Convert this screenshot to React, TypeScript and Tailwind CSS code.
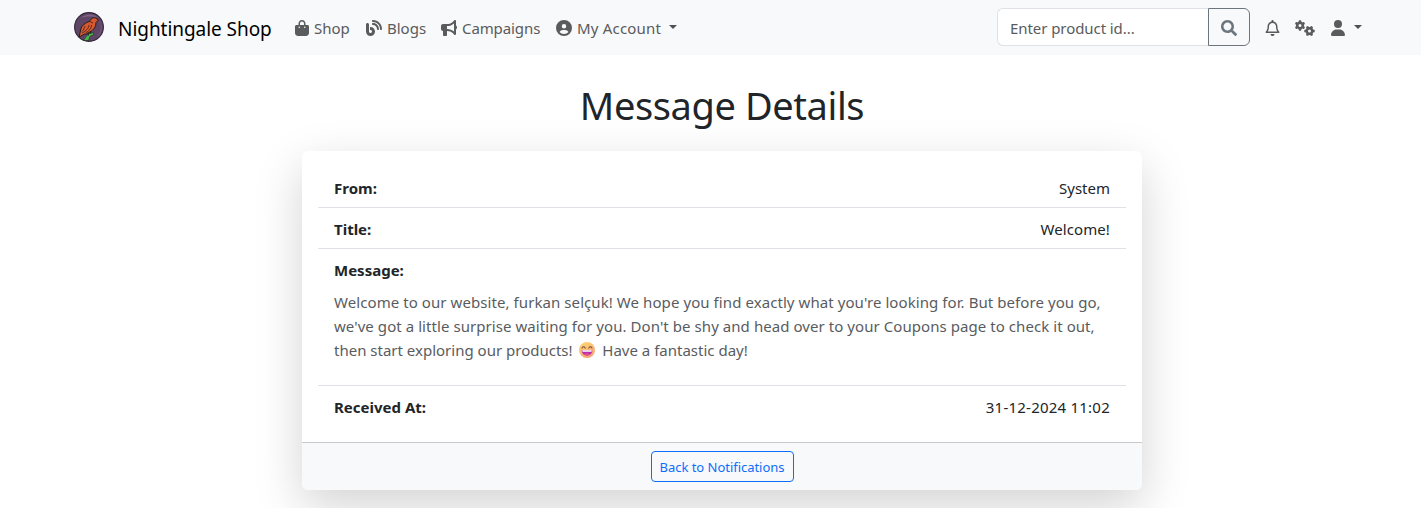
import { FaBagShopping, FaBlog, FaBullhorn, FaCircleUser, FaRegBell, FaGears, FaUser } from "react-icons/fa6";
import { FaSearch } from "react-icons/fa";

function Logo() {
  return (
    <svg width="30" height="30" viewBox="0 0 30 30">
      <circle cx="15" cy="15" r="14.4" fill="#5f4566" stroke="#33283a" strokeWidth="1.1" />
      <path d="M7 6C11 2 19 1 24 6C20 4 12 4 7 6Z" fill="#7c6484" />
      <path d="M24 7c4 6 4 13-2 19 7-4 8-13 2-19Z" fill="#74587c" />
      <path d="M9.500 28.500l2.500-4 4-3.500 3-.5 1 2-4 2-1.500 4Z" fill="#45b64e" stroke="#222" strokeWidth=".6" />
      <path d="M24.500 8L21.500 6C19 5 17 6.700 15.500 9.500C11.500 10.500 8 13 6.800 17L5.200 25L10.500 22L12 22.300L15.800 20C20 18 22 14.500 22 10.500Z" fill="#d8592f" stroke="#2a1c1c" strokeWidth="1" strokeLinejoin="round" />
      <path d="M16 9.500l3 1.500M15 13c0 3-3 6-7 8M17.500 13c0 4-3 6-6 8M11 14c-.5 2-1.500 4-3 5.500" fill="none" stroke="#3a1f1c" strokeWidth=".8" />
      <path d="M16 19.500l1 2.500M14 20.500l.5 3" stroke="#222" strokeWidth=".9" />
    </svg>
  );
}

function Grin() {
  return (
    <svg width="18" height="18" viewBox="0 0 18 18" className="mx-[2px] inline-block align-[-3px]">
      <defs>
        <linearGradient id="face" x1="0" y1="0" x2="0.5" y2="1">
          <stop offset="0" stopColor="#ffda70" />
          <stop offset="1" stopColor="#f5a574" />
        </linearGradient>
      </defs>
      <circle cx="9" cy="9" r="8" fill="url(#face)" />
      <path d="M4 7q1.500-2.400 3.200 0M10.800 7q1.700-2.400 3.200 0" fill="none" stroke="#765048" strokeWidth="1.100" strokeLinecap="round" />
      <path d="M3.700 9.300h10.600c0 7-10.600 7-10.600 0Z" fill="#b52fae" />
      <path d="M4.300 9.300h9.400v1.500H4.500Z" fill="#fff" />
      <path d="M5.800 13.200q3.200-2 6.400 0q-3.200 2.600-6.400 0Z" fill="#e84a91" />
    </svg>
  );
}

function Caret() {
  return <span className="inline-block border-x-[4px] border-t-[4px] border-x-transparent border-t-[#4d5154]" />;
}

function Row({ label, value, valueClass = "" }: { label: string; value: string; valueClass?: string }) {
  return (
    <div className="flex h-10 items-center justify-between px-4 pt-0.5">
      <span className="font-bold">{label}</span>
      <span className={valueClass}>{value}</span>
    </div>
  );
}

export default function App() {
  return (
    <div className="h-[508px] overflow-hidden bg-white font-['Noto_Sans',sans-serif] text-[15px] leading-6 text-[#212529]">
      <nav className="flex h-[55px] items-center bg-[#f8f9fa] pl-[74px] pr-[59px] pb-px text-[#595b5d]">
        <Logo />
        <span className="ml-[14px] w-[177px] whitespace-nowrap pt-[3px] text-[19px] tracking-[-0.05px] text-black">Nightingale Shop</span>
        <div className="flex items-center whitespace-nowrap pt-px">
          <a className="flex w-[71px] items-center gap-[5px]"><FaBagShopping className="h-4 w-[14px]" />Shop</a>
          <a className="flex w-[75px] items-center gap-[5px]"><FaBlog className="size-4" />Blogs</a>
          <a className="flex w-[115px] items-center gap-[5px] tracking-[-0.1px]"><FaBullhorn className="size-4" />Campaigns</a>
          <a className="flex items-center"><FaCircleUser className="size-4" /><span className="ml-[5px] w-[92px] tracking-[0.2px]">My Account</span><span className="-mt-0.5 flex"><Caret /></span></a>
        </div>
        <div className="ml-auto flex items-center">
          <div className="flex h-[38px] w-[253px]">
            <div className="flex flex-1 items-center rounded-l-md border border-r-0 border-[#dee2e6] bg-white pl-3 pt-px tracking-[-0.07px]">Enter product id...</div>
            <div className="flex w-[42px] items-center justify-center rounded-r-md border border-[#6c757d] pt-0.5 text-[#6c757d]"><FaSearch className="size-4" /></div>
          </div>
          <FaRegBell className="ml-[15px] mt-0.5 h-4 w-[15px]" />
          <FaGears className="ml-[15px] mt-0.5 h-4 w-5" viewBox="0 0 640 512" />
          <FaUser className="ml-4 mt-0.5 h-4 w-[14px]" />
          <span className="ml-[9px] flex"><Caret /></span>
        </div>
      </nav>
      <main className="ml-[302px] w-[840px]">
        <h1 className="flex h-[96px] items-center justify-center pt-[4px] text-[38px] tracking-[-0.4px]">Message Details</h1>
        <section className="h-[339px] rounded-[6px] bg-white shadow-[0_16px_48px_rgba(0,0,0,0.175)]">
          <div className="h-[291px] px-4 pt-4">
            <div className="border-b border-[#dee2e6]"><Row label="From:" value="System" /></div>
            <div className="border-b border-[#dee2e6]"><Row label="Title:" value="Welcome!" valueClass="tracking-[0.1px]" /></div>
            <div className="h-[137px] border-b border-[#dee2e6]">
              <Row label="Message:" value="" />
              <p className="whitespace-nowrap px-4 pt-px text-[#595c5f]">
                <span className="block tracking-[0.075px]">Welcome to our website, furkan selçuk! We hope you find exactly what you're looking for. But before you go,</span>
                <span className="block tracking-[0.064px]">we've got a little surprise waiting for you. Don't be shy and head over to your Coupons page to check it out,</span>
                <span className="block">then start exploring our products! <Grin /> Have a fantastic day!</span>
              </p>
            </div>
            <Row label="Received At:" value="31-12-2024 11:02" valueClass="tracking-[0.23px]" />
          </div>
          <footer className="flex h-12 items-center justify-center rounded-b-[6px] border-t border-[#c8c9ca] bg-[#f8f9fa]">
            <button className="h-[31px] w-[143px] whitespace-nowrap rounded border border-[#0d6efd] text-[13px] tracking-[-0.03px] text-[#0d6efd]">Back to Notifications</button>
          </footer>
        </section>
      </main>
    </div>
  );
}
